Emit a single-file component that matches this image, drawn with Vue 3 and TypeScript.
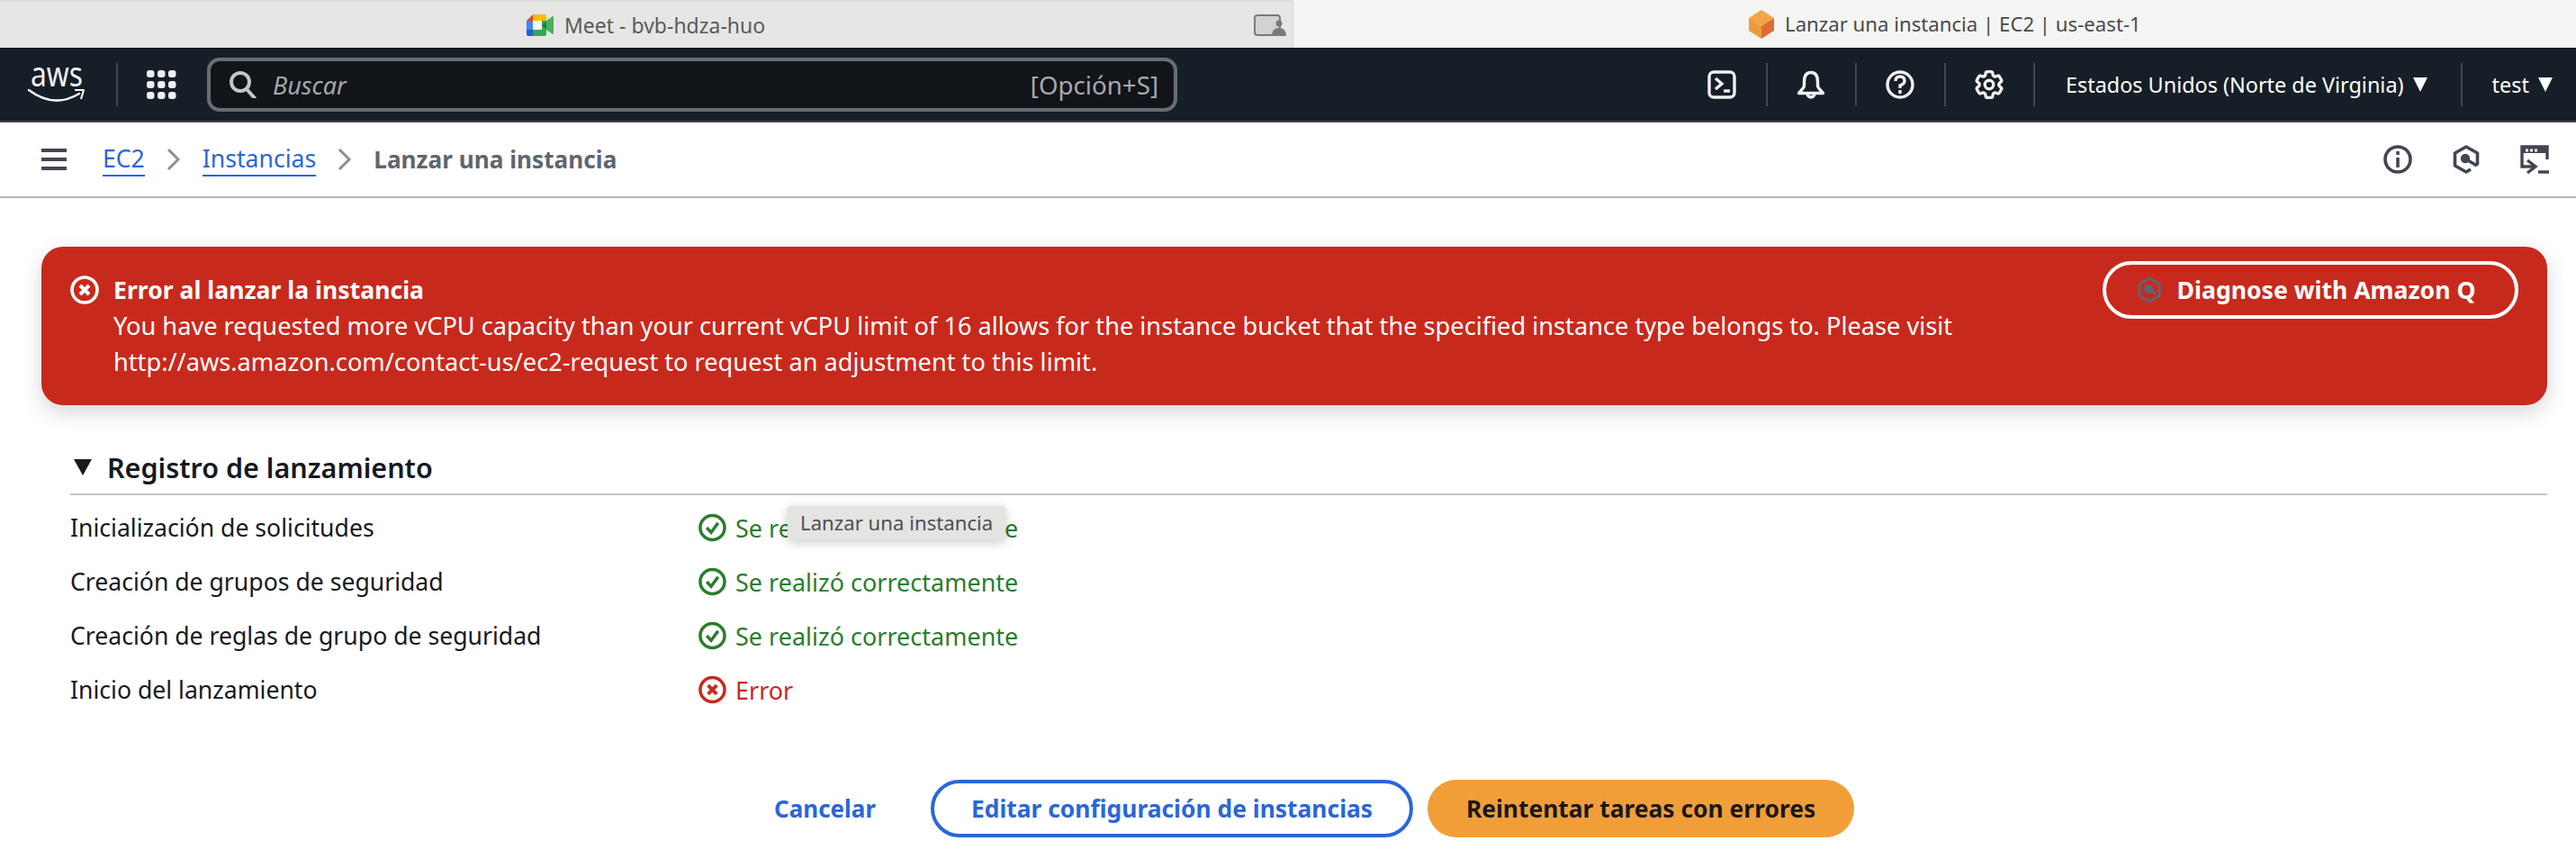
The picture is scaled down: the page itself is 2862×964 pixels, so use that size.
<template>
  <div class="page">
    <div class="tabs">
      <div class="tab tab-off">
        <svg class="fav-meet" viewBox="0 0 30 24">
          <path d="M0 7 L7 0 V7Z" fill="#ea4335" />
          <path d="M0 7 H7 V17 H0Z" fill="#4285f4" />
          <path d="M0 17 H7 V24 H2 Q0 24 0 22Z" fill="#1967d2" />
          <path d="M7 0 H20 Q22 0 22 2 V7 H7Z" fill="#fbbc04" />
          <path d="M7 17 H22 V22 Q22 24 20 24 H7Z" fill="#34a853" />
          <path d="M7 7 H17 V17 H7Z" fill="#f5f5f5" />
          <path d="M17 7 H22 V17 H17Z" fill="#34a853" />
          <path d="M17 12 L23 7 V17Z" fill="#1e7e3c" />
          <path d="M22 7 L29 2 Q30 2 30 3 V21 Q30 22 29 22 L22 17Z" fill="#4caf60" />
        </svg>
        <span>Meet - bvb-hdza-huo</span>
        <svg class="pip" viewBox="0 0 36 24">
          <rect x="1" y="1" width="28" height="22" rx="3" fill="#d2d2d2" stroke="#7a7a7a" stroke-width="2" />
          <circle cx="28" cy="10" r="3.5" fill="#7a7a7a" />
          <path d="M20 24 Q20 15 28 15 Q36 15 36 24Z" fill="#7a7a7a" />
        </svg>
      </div>
      <div class="tab tab-on">
        <svg class="fav-ec2" viewBox="0 0 28 32">
          <path d="M14 0 L28 9 L14 18 L0 9Z" fill="#f3a446" />
          <path d="M0 9 L14 18 V32 L0 23Z" fill="#ec9a3f" />
          <path d="M28 9 L14 18 V32 L28 23Z" fill="#dd6b32" />
        </svg>
        <span>Lanzar una instancia | EC2 | us-east-1</span>
      </div>
    </div>

    <header class="topnav">
      <svg class="aws" viewBox="0 0 62 42">
        <text x="2" y="23" class="aws-text" textLength="58" lengthAdjust="spacingAndGlyphs">aws</text>
        <path d="M0 27 Q28 48 56 31" fill="none" stroke="#f2f2f4" stroke-width="2.6" stroke-linecap="round" />
        <path d="M51 27 L61 27 L58 37" fill="none" stroke="#f2f2f4" stroke-width="2.2" stroke-linejoin="round" />
      </svg>
      <i class="sep sep-aws"></i>
      <svg class="grid" viewBox="0 0 33 32" fill="#eeeef0">
        <rect v-for="d in gridDots" :key="d.k" :x="d.x" :y="d.y" width="8.5" height="8" rx="3" />
      </svg>
      <div class="search">
        <svg class="search-ico" viewBox="0 0 30 30" fill="none" stroke="#c4c5c8" stroke-width="4">
          <circle cx="12" cy="12" r="10" />
          <path d="M19 20 L28 30" stroke-linecap="round" />
        </svg>
        <span class="search-ph">Buscar</span>
        <span class="search-key">[Opción+S]</span>
      </div>
      <div class="nav-right">
        <svg class="nav-ico first" viewBox="0 0 32 32" fill="none" stroke="#f0f0f2" stroke-width="3.4">
          <rect x="2" y="2" width="28" height="28" rx="5" />
          <path d="M9 9 L16 15 L9 21" />
          <path d="M18 23 H25" />
        </svg>
        <i class="sep"></i>
        <svg class="nav-ico" viewBox="0 0 32 32" fill="none" stroke="#f0f0f2" stroke-width="3.4" stroke-linejoin="round">
          <path d="M16 2.5 C10 2.5 8.5 8 8.5 13 V17 C8.5 20 5 22 2.5 25.5 H29.5 C27 22 23.5 20 23.5 17 V13 C23.5 8 22 2.5 16 2.5Z" />
          <path d="M12 26 a4 4 0 0 0 8 0" />
        </svg>
        <i class="sep"></i>
        <svg class="nav-ico" viewBox="0 0 32 32" fill="none" stroke="#f0f0f2" stroke-width="3.4">
          <circle cx="16" cy="16" r="14" />
          <path d="M11 12 Q11 7 16 7 Q21 7 21 12 Q21 15 16 17 V20" />
          <path d="M16 22 V26" />
        </svg>
        <i class="sep"></i>
        <svg class="nav-ico" viewBox="2 2 20 20" fill="none" stroke="#f0f0f2" stroke-width="2.1" stroke-linejoin="round">
          <path d="M9.594 3.94c.09-.542.56-.94 1.11-.94h2.593c.55 0 1.02.398 1.11.94l.213 1.281c.063.374.313.686.645.87.074.04.147.083.22.127.325.196.72.257 1.075.124l1.217-.456a1.125 1.125 0 0 1 1.37.49l1.296 2.247a1.125 1.125 0 0 1-.26 1.431l-1.003.827c-.293.241-.438.613-.43.992a7.723 7.723 0 0 1 0 .255c-.008.378.137.75.43.991l1.004.827c.424.35.534.955.26 1.43l-1.298 2.247a1.125 1.125 0 0 1-1.369.491l-1.217-.456c-.355-.133-.75-.072-1.076.124a6.47 6.47 0 0 1-.22.128c-.331.183-.581.495-.644.869l-.213 1.281c-.09.543-.56.94-1.11.94h-2.594c-.55 0-1.019-.398-1.11-.94l-.213-1.281c-.062-.374-.312-.686-.644-.87a6.52 6.52 0 0 1-.22-.127c-.325-.196-.72-.257-1.076-.124l-1.217.456a1.125 1.125 0 0 1-1.369-.49l-1.297-2.247a1.125 1.125 0 0 1 .26-1.431l1.004-.827c.292-.24.437-.613.43-.991a6.932 6.932 0 0 1 0-.255c.007-.38-.138-.751-.43-.992l-1.004-.827a1.125 1.125 0 0 1-.26-1.43l1.297-2.247a1.125 1.125 0 0 1 1.37-.491l1.216.456c.356.133.751.072 1.076-.124.072-.044.146-.086.22-.128.332-.183.582-.495.644-.869l.214-1.28Z" />
          <circle cx="12" cy="12" r="3" />
        </svg>
        <i class="sep"></i>
        <span class="nav-text region">Estados Unidos (Norte de Virginia)</span>
        <i class="caret"></i>
        <i class="sep sep-user"></i>
        <span class="nav-text">test</span>
        <i class="caret"></i>
      </div>
    </header>

    <div class="crumbs">
      <div class="burger"><i></i><i></i><i></i></div>
      <a class="crumb-link ec2">EC2</a>
      <svg class="chev" viewBox="0 0 16 24" fill="none" stroke="#8d9096" stroke-width="3"><path d="M2 1 L13 12 L2 23" /></svg>
      <a class="crumb-link">Instancias</a>
      <svg class="chev" viewBox="0 0 16 24" fill="none" stroke="#8d9096" stroke-width="3"><path d="M2 1 L13 12 L2 23" /></svg>
      <span class="crumb-now">Lanzar una instancia</span>
      <div class="crumb-tools">
        <svg class="tool" viewBox="0 0 32 32" fill="none" stroke="#424650" stroke-width="3.6">
          <circle cx="16" cy="16" r="14" />
          <path d="M16 14 V25" />
          <path d="M16 7 V11" />
        </svg>
        <svg class="tool tool-q" viewBox="0 0 30 32" fill="none" stroke="#424650" stroke-width="3.6" stroke-linejoin="round">
          <path d="M26 22 L27.5 21 V9 L15 2 L2.5 9 V23 L15 30 L20 27" />
          <circle cx="14" cy="15" r="3.4" fill="#424650" />
          <path d="M15 16 L27 23" />
        </svg>
        <svg class="tool" viewBox="0 0 32 32" fill="none" stroke="#424650" stroke-width="3.4">
          <path d="M5 24 H2 V2 H30 V16" />
          <rect x="2" y="2" width="28" height="7" fill="#424650" stroke="none" />
          <path d="M6 6 H19" stroke="#fff" stroke-width="3" stroke-dasharray="3 2" />
          <path d="M8 17 L17 24 L8 31" />
          <path d="M4 24 H16" />
          <path d="M20 30 H32" />
        </svg>
      </div>
    </div>

    <main class="content">
      <section class="alert">
        <svg class="alert-ico" viewBox="0 0 32 32" fill="none" stroke="#fff" stroke-width="3.6">
          <circle cx="16" cy="16" r="14" />
          <path d="M11 11 L21 21 M21 11 L11 21" stroke-width="4" />
        </svg>
        <div class="alert-body">
          <div class="alert-title">Error al lanzar la instancia</div>
          <div>You have requested more vCPU capacity than your current vCPU limit of 16 allows for the instance bucket that the specified instance type belongs to. Please visit</div>
          <div>http://aws.amazon.com/contact-us/ec2-request to request an adjustment to this limit.</div>
        </div>
        <button class="btn-q">
          <svg class="q-ico" viewBox="0 0 30 32" fill="none" stroke="#5f6570" stroke-width="3" stroke-linejoin="round">
            <path d="M15 2 L27 9 V23 L15 30 L3 23 V9Z" />
            <circle cx="14" cy="15" r="4" fill="#5f6570" />
            <path d="M15 16 L23 21" />
          </svg>
          Diagnose with Amazon Q
        </button>
      </section>

      <section class="log">
        <h2 class="log-title"><i class="log-caret"></i>Registro de lanzamiento</h2>
        <div v-for="(row, i) in rows" :key="row.label" class="log-row">
          <span class="log-label">{{ row.label }}</span>
          <span class="log-status" :class="row.ok ? 'ok' : 'bad'">
            <svg class="status-ico" viewBox="0 0 32 32" fill="none" stroke="currentColor" stroke-width="3.6">
              <circle cx="16" cy="16" r="14" />
              <path v-if="row.ok" d="M9.5 16 L14.5 21.5 L22.5 10.5" />
              <path v-else d="M11 11 L21 21 M21 11 L11 21" stroke-width="4" />
            </svg>
            {{ row.ok ? 'Se realizó correctamente' : 'Error' }}
            <span v-if="i === 0" class="tooltip">Lanzar una instancia</span>
          </span>
        </div>
      </section>

      <div class="actions">
        <a class="btn-cancel">Cancelar</a>
        <button class="btn-edit">Editar configuración de instancias</button>
        <button class="btn-retry">Reintentar tareas con errores</button>
      </div>
    </main>
  </div>
</template>

<script setup lang="ts">
const rows = [
  { label: 'Inicialización de solicitudes', ok: true },
  { label: 'Creación de grupos de seguridad', ok: true },
  { label: 'Creación de reglas de grupo de seguridad', ok: true },
  { label: 'Inicio del lanzamiento', ok: false }
]

// puntos del icono de servicios, 3x3
const gridDots = [0, 12, 24].flatMap(y =>
  [0, 12, 24].map(x => ({ k: `${x}-${y}`, x, y }))
)
</script>

<style>
html, body { margin: 0; background: #fff; }
</style>

<style scoped>
.page { width: 2862px; height: 964px; overflow: hidden; background: #fff; font-family: "Noto Sans", sans-serif; font-size: 28px; color: #16191f; }

.tabs { display: flex; height: 54px; box-sizing: border-box; border-bottom: 1px solid #111; color: #5b5b5b; }
.tab { display: flex; align-items: center; box-sizing: border-box; }
.tab-off { width: 1437px; background: #e6e6e4; border-top: 2px solid #dcdcdc; border-right: 1px solid #d4d4d2; padding-left: 585px; font-size: 23px; }
.tab-on { flex: 1; background: #f4f4f2; padding-left: 506px; color: #4a4a4a; font-size: 22.2px; }
.fav-meet { width: 30px; height: 24px; margin-right: 12px; }
.pip { width: 36px; height: 24px; margin-left: auto; margin-right: 7px; }
.fav-ec2 { width: 28px; height: 32px; margin-right: 12px; }

.topnav { display: flex; align-items: center; height: 82px; box-sizing: border-box; background: #161e27; border-bottom: 2px solid #414750; padding-left: 32px; color: #fff; }
.aws { width: 62px; height: 42px; margin-right: 35px; flex: none; overflow: visible; }
.aws-text { font-family: "Noto Sans", sans-serif; font-size: 39px; font-weight: 400; fill: #f2f2f4; }
.sep { display: block; width: 2px; height: 48px; background: #414750; flex: none; }
.sep-aws { margin-right: 32px; }
.grid { width: 33px; height: 32px; margin-right: 34px; flex: none; }
.search { display: flex; align-items: center; flex: none; width: 1078px; height: 60px; box-sizing: border-box; background: #111419; border: 4px solid #686c73; border-radius: 14px; padding: 0 17px 0 21px; }
.search-ico { width: 30px; height: 30px; margin-right: 18px; }
.search-ph { font-style: italic; color: #a5a7ab; font-size: 27px; }
.search-key { margin-left: auto; color: #a8a9ad; font-size: 27.7px; }
.nav-right { display: flex; align-items: center; flex: none; margin-left: 589px; }
.nav-ico { width: 32px; height: 32px; margin: 0 33px 0 32px; flex: none; }
.nav-ico.first { margin-left: 0; }
.nav-text { font-size: 23.4px; white-space: nowrap; }
.region { margin-left: 34px; }
.caret { display: block; flex: none; width: 0; height: 0; margin-left: 10px; border-left: 8px solid transparent; border-right: 8px solid transparent; border-top: 16px solid #fff; }
.sep-user { margin: 0 33px 0 37px; }

.crumbs { display: flex; align-items: center; height: 84px; box-sizing: border-box; border-bottom: 2px solid #b6b6bc; padding: 0 30px 0 46px; }
.burger { display: flex; flex-direction: column; justify-content: space-between; width: 28px; height: 24px; margin-right: 40px; }
.burger i { display: block; height: 4px; background: #424650; }
.crumb-link { color: #2a66d9; border-bottom: 2px solid #2a66d9; font-size: 26.6px; line-height: 36px; }
.chev { width: 16px; height: 24px; margin: 0 24px; }
.crumb-now { font-weight: 700; color: #5f6570; font-size: 26.2px; }
.crumb-tools { display: flex; align-items: center; gap: 45px; margin-left: auto; }
.tool { width: 32px; height: 32px; overflow: visible; }
.tool-q { width: 30px; }

.content { padding: 54px 32px 0 46px; }
.alert { display: flex; align-items: flex-start; height: 176px; box-sizing: border-box; background: #c8291d; border-radius: 24px; padding: 16px 32px 0 32px; color: #fff; box-shadow: 0 8px 24px rgba(0, 0, 0, 0.16); line-height: 40px; font-size: 27.2px; }
.alert-ico { width: 32px; height: 32px; margin: 16px 16px 0 0; flex: none; }
.alert-body { flex: 1; padding-top: 12px; white-space: nowrap; }
.alert-title { font-weight: 700; font-size: 26.6px; }
.btn-q { display: flex; align-items: center; justify-content: center; flex: none; width: 462px; height: 64px; box-sizing: border-box; background: transparent; border: 4px solid #fff; border-radius: 32px; color: #fff; font: 700 26.6px "Noto Sans", sans-serif; padding: 0 10px 0 0; }
.q-ico { width: 28px; height: 32px; margin-right: 17px; }

.log { margin: 42px 0 0 32px; }
.log-title { display: flex; align-items: center; height: 58px; box-sizing: border-box; margin: 0 0 6px; border-bottom: 2px solid #c6c6cd; font-size: 30.5px; font-weight: 600; padding-bottom: 2px; }
.log-caret { display: block; width: 0; height: 0; margin: 0 17px 0 4px; border-left: 10px solid transparent; border-right: 10px solid transparent; border-top: 18px solid #16191f; }
.log-row { display: flex; align-items: center; height: 60px; }
.log-label { width: 698px; font-size: 26.6px; }
.log-status { position: relative; display: flex; align-items: center; gap: 10px; font-size: 27px; }
.ok { color: #2a7d2e; }
.bad { color: #c8291d; }
.status-ico { width: 31px; height: 32px; }
.tooltip { position: absolute; left: 99px; top: -6px; height: 37px; padding: 0 14px; display: flex; align-items: center; background: #e4e4e2; border-radius: 3px; color: #4f4f4f; font-size: 22.2px; box-shadow: 0 3px 12px rgba(0, 0, 0, 0.22); white-space: nowrap; }

.actions { display: flex; align-items: center; justify-content: center; margin-top: 70px; padding-left: 44px; }
.actions button { height: 64px; box-sizing: border-box; border-radius: 32px; font: 700 26.4px "Noto Sans", sans-serif; }
.btn-cancel { color: #2a66d9; font-weight: 700; font-size: 26px; margin-right: 61px; }
.btn-edit { width: 536px; background: #fff; border: 4px solid #2a66d9; color: #2a66d9; margin-right: 16px; }
.btn-retry { width: 474px; background: #f29e38; border: none; color: #16191f; }
</style>
